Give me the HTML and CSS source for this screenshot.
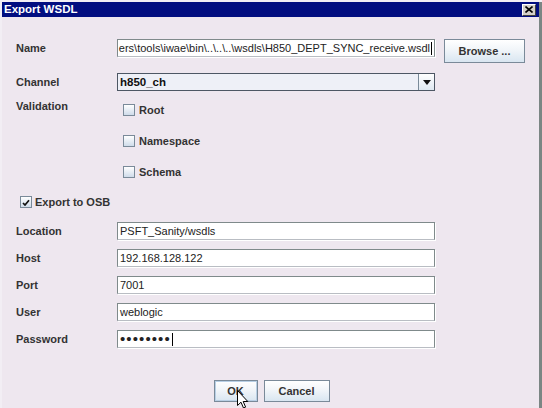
FILE: index.html
```html
<!DOCTYPE html>
<html>
<head>
<meta charset="utf-8">
<link rel="stylesheet" href="styles.css">
</head>
<body>
<div class="dialog">
  <div class="titlebar">
    <span class="title">Export WSDL</span>
    <span class="close"><svg width="8" height="7" viewBox="0 0 8 7"><path d="M0.5 0.5 L7.5 6.5 M7.5 0.5 L0.5 6.5" stroke="#000" stroke-width="1.6"/></svg></span>
  </div>
  <div class="content">
    <div class="row row-name">
      <span class="lbl">Name</span>
      <div class="field path"><span class="ptext">ers\tools\iwae\bin\..\..\..\wsdls\H850_DEPT_SYNC_receive.wsdl</span><span class="caret"></span></div>
      <button class="btn browse">Browse ...</button>
    </div>
    <div class="row row-channel">
      <span class="lbl">Channel</span>
      <div class="combo"><span class="ctext">h850_ch</span><span class="arrow"><svg width="8" height="5" viewBox="0 0 8 5"><path d="M0 0 H8 L4 5 Z" fill="#111"/></svg></span></div>
    </div>
    <div class="row row-valid">
      <span class="lbl lbl-top">Validation</span>
      <div class="checks">
        <div class="chk"><span class="box"></span><span>Root</span></div>
        <div class="chk"><span class="box"></span><span>Namespace</span></div>
        <div class="chk"><span class="box"></span><span>Schema</span></div>
      </div>
    </div>
    <div class="row row-osb">
      <div class="chk osb"><span class="box checked"><svg width="8" height="7" viewBox="0 0 8 7"><path d="M1 4 L3 6 L7 1.2" stroke="#111" stroke-width="1.7" fill="none"/></svg></span><span>Export to OSB</span></div>
    </div>
    <div class="osbfields">
      <div class="row frow"><span class="lbl">Location</span><div class="field">PSFT_Sanity/wsdls</div></div>
      <div class="row frow"><span class="lbl">Host</span><div class="field">192.168.128.122</div></div>
      <div class="row frow"><span class="lbl">Port</span><div class="field">7001</div></div>
      <div class="row frow"><span class="lbl">User</span><div class="field">weblogic</div></div>
      <div class="row frow"><span class="lbl">Password</span><div class="field"><span class="dots">••••••••</span><span class="caret"></span></div></div>
    </div>
    <div class="buttons">
      <button class="btn ok">OK</button>
      <button class="btn cancel">Cancel</button>
    </div>
  </div>
  <svg class="cursor" width="12" height="19" viewBox="0 0 12 19"><path d="M0.5 0.5 L0.5 15.5 L4 12.2 L6.5 18 L8.6 17.1 L6.2 11.5 L10.8 11.5 Z" fill="#fff" stroke="#000" stroke-width="1"/></svg>
</div>
</body>
</html>
```
FILE: styles.css
```css
* { box-sizing: border-box; }
html, body { margin: 0; padding: 0; }
body {
  background: #f2eef4;
  width: 542px;
  height: 408px;
  overflow: hidden;
  font-family: "Liberation Sans", Arial, sans-serif;
  padding: 2px 0 0 2px;
}
.dialog {
  position: relative;
  width: 540px;
  height: 406px;
  background: #eee7ef;
  border-right: 3px solid #7b8684;
}
.titlebar {
  height: 15px;
  background: #020e80;
  display: flex;
  align-items: center;
  justify-content: space-between;
  padding: 0 3px 0 2px;
}
.title {
  color: #fff;
  font-weight: bold;
  font-size: 11.5px;
  line-height: 15px;
}
.close {
  width: 14px;
  height: 12px;
  background: #d4d0c8;
  border: 1px solid;
  border-color: #fff #404040 #404040 #fff;
  display: flex;
  align-items: center;
  justify-content: center;
}
.content {
  padding: 22px 0 0 14px;
  font-size: 11px;
  color: #333;
}
.row { display: flex; align-items: flex-start; }
.lbl {
  width: 101px;
  flex: none;
  font-weight: bold;
  line-height: 18px;
  color: #333;
}
.lbl-top { line-height: 12px; }
.field {
  width: 318px;
  height: 18px;
  background: #fff;
  border: 1px solid #7f8a8b;
  border-bottom-color: #b9bdc3;
  box-shadow: 1px 1px 0 #fff;
  font-size: 11px;
  line-height: 16px;
  padding-left: 2px;
  color: #222;
  display: flex;
  align-items: center;
  overflow: hidden;
  white-space: nowrap;
}
.path { justify-content: flex-end; padding-right: 2px; }
.ptext { flex: none; }
.caret {
  display: inline-block;
  width: 1px;
  height: 13px;
  background: #000;
  margin-left: 1px;
  flex: none;
}
.row-name { height: 24px; }
.btn {
  font-family: "Liberation Sans", Arial, sans-serif;
  font-weight: bold;
  font-size: 11px;
  color: #333;
  border: 1px solid #7a8a99;
  background: linear-gradient(to bottom, #ffffff 0%, #f1f5f9 45%, #d9e6f1 100%);
  padding: 0;
  margin: 0;
}
.browse {
  width: 81px;
  height: 24px;
  margin-left: 9px;
}
.row-channel { margin-top: 10px; height: 18px; }
.combo {
  width: 318px;
  height: 18px;
  border: 1px solid #4d5764;
  background: #eef0f7;
  display: flex;
  align-items: center;
  justify-content: space-between;
}
.ctext {
  font-weight: bold;
  font-size: 11.5px;
  color: #111;
  padding-left: 2px;
}
.arrow {
  width: 16px;
  height: 16px;
  border-left: 1px solid #7a8a99;
  background: linear-gradient(to bottom, #ffffff 0%, #dfe8f1 100%);
  display: flex;
  align-items: center;
  justify-content: center;
}
.row-valid { margin-top: 9px; }
.checks {
  display: flex;
  flex-direction: column;
  gap: 11px;
  padding-left: 6px;
}
.chk {
  height: 20px;
  display: flex;
  align-items: center;
  gap: 4px;
  font-weight: bold;
  color: #333;
}
.box {
  width: 12px;
  height: 12px;
  border: 1px solid #7a8a99;
  background: linear-gradient(to bottom, #ffffff 0%, #cfdcea 100%);
  display: flex;
  align-items: center;
  justify-content: center;
  flex: none;
}
.row-osb { margin-top: 10px; }
.osb { padding-left: 4px; gap: 3px; }
.osbfields {
  margin-top: 10px;
  display: flex;
  flex-direction: column;
  gap: 9px;
}
.frow { height: 18px; }
.dots {
  font-size: 15px;
  letter-spacing: 1.1px;
  color: #222;
  line-height: 16px;
}
.buttons {
  margin-top: 32px;
  margin-left: -14px;
  display: flex;
  justify-content: center;
  gap: 6px;
  padding-left: 2px;
}
.ok {
  width: 44px;
  height: 22px;
  box-shadow: inset 0 0 0 1px #b8cfe5;
}
.cancel {
  width: 66px;
  height: 22px;
}
.cursor {
  position: absolute;
  left: 235px;
  top: 388px;
}
```
